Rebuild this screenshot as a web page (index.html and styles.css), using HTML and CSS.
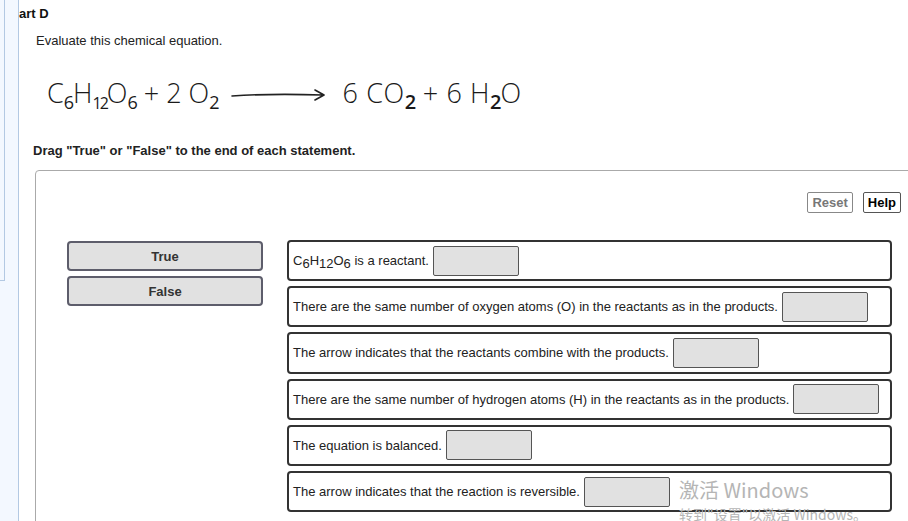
FILE: index.html
```html
<!DOCTYPE html>
<html>
<head>
<meta charset="utf-8">
<link rel="stylesheet" href="styles.css">
</head>
<body>
<div class="page">
  <aside class="side"><div class="side-inner"></div></aside>
  <main class="main">
    <h2 class="part">art D</h2>
    <p class="intro">Evaluate this chemical equation.</p>
    <div class="equation">
      <span class="lhs">C<sub>6</sub>H<sub class="tight">12</sub>O<sub>6</sub> + 2 O<sub>2</sub></span>
      <svg class="arrow" width="96" height="14" viewBox="0 0 96 14"><path d="M1 8 C30 6 60 6 92 7 M84 2 L93 7 L84 12" fill="none" stroke="#222" stroke-width="1.6" stroke-linecap="round" stroke-linejoin="round"/></svg>
      <span class="rhs">6 CO<sub class="bold">2</sub> + 6 H<sub class="bold">2</sub>O</span>
    </div>
    <p class="drag">Drag "True" or "False" to the end of each statement.</p>
    <section class="panel">
      <div class="tools">
        <button class="btn reset">Reset</button>
        <button class="btn help">Help</button>
      </div>
      <div class="work">
        <div class="bank">
          <div class="chip">True</div>
          <div class="chip">False</div>
        </div>
        <div class="rows">
          <div class="row"><span>C<sub>6</sub>H<sub>12</sub>O<sub>6</sub> is a reactant.</span><span class="drop"></span></div>
          <div class="row"><span>There are the same number of oxygen atoms (O) in the reactants as in the products.</span><span class="drop"></span></div>
          <div class="row"><span>The arrow indicates that the reactants combine with the products.</span><span class="drop"></span></div>
          <div class="row"><span>There are the same number of hydrogen atoms (H) in the reactants as in the products.</span><span class="drop"></span></div>
          <div class="row"><span>The equation is balanced.</span><span class="drop"></span></div>
          <div class="row"><span>The arrow indicates that the reaction is reversible.</span><span class="drop"></span></div>
        </div>
      </div>
    </section>
  </main>
</div>
<div class="watermark">
  <div class="wm1">激活 Windows</div>
  <div class="wm2">转到"设置"以激活 Windows。</div>
</div>
</body>
</html>
```
FILE: styles.css
```css
html, body {
  margin: 0;
  padding: 0;
  width: 908px;
  height: 521px;
  overflow: hidden;
  background: #fff;
  font-family: "Liberation Sans", Arial, sans-serif;
  color: #222;
}
.page {
  display: flex;
  height: 521px;
  overflow: hidden;
}
.side {
  width: 18px;
  flex: none;
  background: #f3f8ff;
  border-right: 1px solid #b3c9e3;
}
.side-inner {
  width: 4px;
  height: 280px;
  border-right: 1px solid #b3c9e3;
  border-bottom: 1px solid #b3c9e3;
}
.main {
  flex: 1;
  min-width: 0;
}
.part {
  margin: 0;
  padding-top: 6px;
  font-size: 13px;
  font-weight: bold;
  line-height: 15px;
  color: #111;
}
.intro {
  margin: 12px 0 0 17px;
  font-size: 13px;
  line-height: 15px;
  color: #222;
}
.equation {
  margin: 28px 0 0 28px;
  height: 40px;
  display: flex;
  align-items: flex-start;
  font-family: "Open Sans", sans-serif;
  font-weight: 300;
  font-size: 27px;
  line-height: 34px;
  color: #1a1a1a;
}
.equation sub {
  font-size: 18px;
  vertical-align: -6px;
  line-height: 0;
  font-weight: 400;
  letter-spacing: -1px;
}
.equation sub.tight {
  letter-spacing: -2px;
  font-size: 16px;
}
.equation sub.bold {
  font-weight: 600;
  font-size: 20px;
}
.rhs {
  letter-spacing: 0.6px;
}
.arrow {
  margin: 12px 16px 0 12px;
  flex: none;
}
.drag {
  margin: 27px 0 0 14px;
  font-size: 13px;
  font-weight: bold;
  line-height: 15px;
  color: #222;
}
.panel {
  margin: 12px 0 0 16px;
  width: 900px;
  height: 400px;
  border: 1px solid #aaa;
  border-radius: 4px;
  box-sizing: border-box;
}
.tools {
  display: flex;
  justify-content: flex-end;
  gap: 10px;
  padding: 21px 0 0 0;
  width: 865px;
}
.btn {
  font-family: "Liberation Sans", Arial, sans-serif;
  font-size: 13px;
  font-weight: bold;
  height: 21px;
  padding: 0 4px;
  background: #fff;
  border: 1px solid #888;
  border-radius: 2px;
}
.reset { color: #777; }
.help { color: #000; border-color: #555; }
.work {
  display: flex;
  gap: 24px;
  margin-top: 27px;
  padding-left: 31px;
}
.bank {
  display: flex;
  flex-direction: column;
  gap: 5px;
  padding-top: 1px;
}
.chip {
  width: 196px;
  height: 30px;
  box-sizing: border-box;
  border: 2px solid #5d5d6b;
  border-radius: 4px;
  background: #e1e1e1;
  font-size: 13px;
  font-weight: bold;
  color: #333;
  display: flex;
  align-items: center;
  justify-content: center;
}
.rows {
  display: flex;
  flex-direction: column;
  gap: 5px;
}
.row {
  width: 605px;
  height: 41.2px;
  box-sizing: border-box;
  border: 2px solid #333;
  border-radius: 4px;
  display: flex;
  align-items: center;
  padding-left: 4px;
  font-size: 13px;
  color: #222;
}
.row sub {
  font-size: 13px;
  vertical-align: -3px;
  line-height: 0;
}
.drop {
  width: 86px;
  height: 30px;
  box-sizing: border-box;
  margin-left: 4px;
  background: #e1e1e1;
  border: 1px solid #555;
  border-radius: 2px;
  flex: none;
}
.watermark {
  position: absolute;
  left: 679px;
  top: 477px;
  color: #b5b5b5;
  font-family: "Noto Sans CJK SC", "Noto Sans", sans-serif;
}
.wm1 { font-size: 20px; line-height: 26px; }
.wm2 { font-size: 14px; line-height: 18px; margin-top: 2px; }
```
